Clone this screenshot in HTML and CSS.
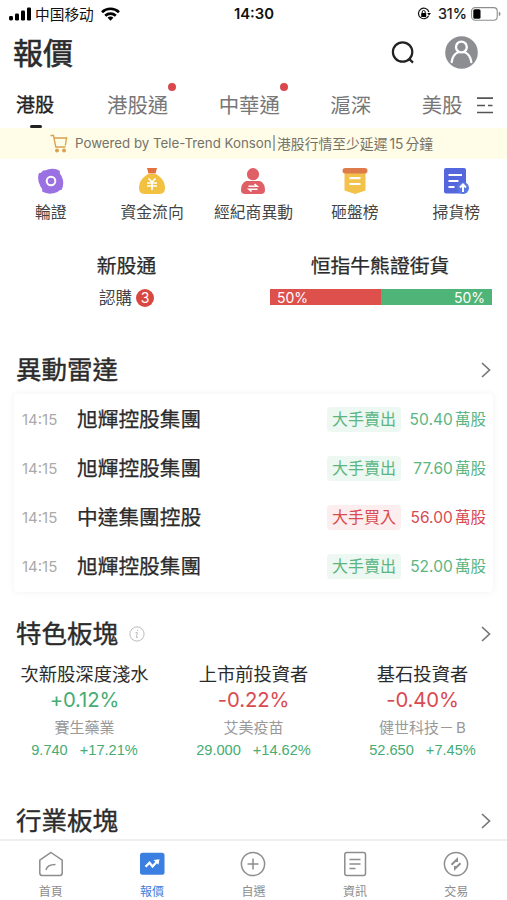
FILE: index.html
```html
<!DOCTYPE html>
<html lang="zh-Hant">
<head>
<meta charset="utf-8">
<meta name="viewport" content="width=device-width, initial-scale=1">
<title>報價</title>
<link rel="stylesheet" href="styles.css">
</head>
<body>
<div class="screen">
  <header class="status">
    <div class="status-left">
      <svg width="22" height="14" viewBox="0 0 22 14"><rect x="0" y="9" width="4" height="4.5" rx="1.4"/><rect x="6" y="6.5" width="4" height="7" rx="1.2"/><rect x="12" y="3.5" width="4" height="10" rx="1.2"/><rect x="18" y="0.5" width="4" height="13" rx="1.2"/></svg>
      <span class="carrier" lang="zh-Hans">中国移动</span>
      <svg width="19" height="14" viewBox="0 0 19 14" fill="none" stroke="#000" stroke-width="2.6"><path d="M1 5.2a12.3 12.3 0 0 1 17 0M4.2 8.7a7.7 7.7 0 0 1 10.6 0"/><path d="M9.5 13.7 6.6 10.8a4 4 0 0 1 5.8 0z" fill="#000" stroke="none"/></svg>
    </div>
    <div class="clock">14:30</div>
    <div class="status-right">
      <svg width="14" height="14" viewBox="0 0 14 14"><path d="M11.6 8.7A5.3 5.3 0 1 1 11.9 5" fill="none" stroke="#111" stroke-width="1.2"/><path d="M10.2 6.1h3.7l-1.8 2.5z"/><rect x="4.2" y="6" width="5" height="4.1" rx=".6"/><path d="M5.2 6V5a1.5 1.5 0 0 1 3 0v1" fill="none" stroke="#111"/></svg>
      <span class="percent">31%</span>
      <svg width="30" height="14" viewBox="0 0 30 14"><rect x=".6" y=".6" width="25.6" height="12.6" rx="3.5" fill="none" stroke="#8d8d8d" stroke-width="1.1"/><rect x="2.3" y="2.3" width="7.2" height="9.4" rx="1.5"/><path d="M27.8 4.8q1.8.6 1.8 2.2t-1.8 2.2z" fill="#8d8d8d"/></svg>
    </div>
  </header>

  <div class="heading">
    <h1>報價</h1>
    <svg class="search" width="24" height="24" viewBox="0 0 24 24" fill="none" stroke="#222" stroke-width="2.2"><circle cx="11.6" cy="11" r="9.7"/><path d="m17.8 17.6 4.2 4"/></svg>
    <svg width="33" height="33" viewBox="0 0 33 33" fill="none"><circle cx="16.5" cy="16.5" r="16.3" fill="#8c8e92"/><g stroke="#fff" stroke-width="2.3" stroke-linecap="round"><circle cx="16.4" cy="11" r="5.4"/><path d="M6.7 26c.6-5.3 3-8.200 6.4-9.700M19.800 16.300c3.400 1.500 5.800 4.400 6.500 9.700"/></g></svg>
  </div>

  <nav class="tabs">
    <span class="tab active">港股</span>
    <span class="tab dot">港股通</span>
    <span class="tab dot">中華通</span>
    <span class="tab">滬深</span>
    <span class="tab">美股</span>
    <svg width="18" height="18" viewBox="0 0 18 18" fill="none" stroke="#555" stroke-width="1.7"><path d="M1 1.200h16M1 8.500h8M12 8.500h4.500M1 15.500h16"/></svg>
  </nav>

  <div class="notice">
    <svg width="18" height="19" viewBox="0 0 18 19" fill="none" stroke="#d9a04e" stroke-width="1.3"><path d="M.5 1.500h3l2.300 11.500h9.700M4 4h12.600l-1.300 7.500"/><circle cx="7" cy="16.500" r="1.300" fill="#d9a04e"/><circle cx="14" cy="16.500" r="1.300" fill="#d9a04e"/></svg>
    <span class="notice-en">Powered by Tele-Trend Konson|</span><span class="notice-zh">港股行情至少延遲<i>15</i>分鐘</span>
  </div>

  <section class="shortcuts">
    <div class="shortcut">
      <svg width="26" height="26" viewBox="0 0 26 26"><path d="M5 2.200Q7 3.200 9 1.800Q16-1 22 3Q21 5 23.500 8Q27 15 23.500 22Q21.500 21.500 19.500 24Q11 27.500 4 23.500Q5 21.500 2.500 18.500Q-1.500 11 1 5Q4 5 5 2.200Z" fill="#9a70e2"/><circle cx="13" cy="13" r="4.300" fill="none" stroke="#fff" stroke-width="2"/></svg>
      <span>輪證</span>
    </div>
    <div class="shortcut">
      <svg width="26" height="26" viewBox="0 0 26 26"><path d="M9 6C3 9.500 0 14.500 0 20q0 6 6 6h14q6 0 6-6C26 14.500 23 9.500 17 6z" fill="#f2c142"/><path d="M8 0h10l-1.500 5.500h-7z" fill="#e2713d"/><path d="M9.500 10.500 13 14l3.500-3.500M8 15h10M8 18h10M13 14v8" fill="none" stroke="#fff" stroke-width="1.700"/></svg>
      <span>資金流向</span>
    </div>
    <div class="shortcut">
      <svg width="26" height="26" viewBox="0 0 26 26"><circle cx="13" cy="6.200" r="6.100" fill="#e05f66"/><path d="M6 13h14q5 2.500 5 9 0 4-4 4H5q-4 0-4-4 0-6.500 5-9z" fill="#e05f66"/><path d="M8.500 18.300h8.500l-2.500-2.300M17.500 21.200H9l2.500 2.300" fill="none" stroke="#fff" stroke-width="1.600"/></svg>
      <span>經紀商異動</span>
    </div>
    <div class="shortcut">
      <svg width="26" height="26" viewBox="0 0 26 26"><path d="M2.500 3h21v19.500L13 26 2.500 22.500z" fill="#f3c24a"/><rect x=".5" y="0" width="25" height="5.500" rx="2.700" fill="#de7b4b"/><path d="M7.500 10.200h11M7.500 16h11" stroke="#fff" stroke-width="2.200"/></svg>
      <span>砸盤榜</span>
    </div>
    <div class="shortcut">
      <svg width="26" height="26" viewBox="0 0 26 26"><rect x="1" y="0" width="22" height="25.500" rx="2" fill="#5567dc"/><path d="M5.500 7h13.500M5.500 13h10M5.500 19h6" stroke="#fff" stroke-width="2"/><circle cx="20" cy="20" r="6" fill="#5a78e2"/><path d="M20 24v-7M17 19.500l3-3 3 3" fill="none" stroke="#fff" stroke-width="2"/></svg>
      <span>掃貨榜</span>
    </div>
  </section>

  <section class="summary">
    <div class="ipo">
      <h3>新股通</h3>
      <p>認購<b>3</b></p>
    </div>
    <div class="street">
      <h3>恒指牛熊證街貨</h3>
      <div class="ratio"><span class="bear">50%</span><span class="bull">50%</span></div>
    </div>
  </section>

  <div class="section-title radar-title"><h2>異動雷達</h2><svg width="10" height="16" viewBox="0 0 10 16"><path d="m1 1 7.500 7L1 15"/></svg></div>
  <section class="radar">
    <div class="trade sell"><time>14:15</time><strong>旭輝控股集團</strong><em>大手賣出</em><span>50.40<i>萬股</i></span></div>
    <div class="trade sell"><time>14:15</time><strong>旭輝控股集團</strong><em>大手賣出</em><span>77.60<i>萬股</i></span></div>
    <div class="trade buy"><time>14:15</time><strong>中達集團控股</strong><em>大手買入</em><span>56.00<i>萬股</i></span></div>
    <div class="trade sell"><time>14:15</time><strong>旭輝控股集團</strong><em>大手賣出</em><span>52.00<i>萬股</i></span></div>
  </section>

  <div class="section-title feature-title"><h2>特色板塊</h2><svg class="info" width="16" height="16" viewBox="0 0 16 16"><circle cx="8" cy="8" r="7.100"/><path d="M6.500 6.600h1.900l-1.100 4.900h1.500M8.700 3.800v1.200"/></svg><svg width="10" height="16" viewBox="0 0 10 16"><path d="m1 1 7.500 7L1 15"/></svg></div>
  <section class="sectors">
    <div class="sector"><h4>次新股深度淺水</h4><p class="change up">+0.12%</p><p class="lead">賽生藥業</p><p class="quote"><span>9.740</span><span>+17.21%</span></p></div>
    <div class="sector"><h4>上市前投資者</h4><p class="change down">-0.22%</p><p class="lead">艾美疫苗</p><p class="quote"><span>29.000</span><span>+14.62%</span></p></div>
    <div class="sector"><h4>基石投資者</h4><p class="change down">-0.40%</p><p class="lead">健世科技－<i>B</i></p><p class="quote"><span>52.650</span><span>+7.45%</span></p></div>
  </section>

  <div class="section-title industry-title"><h2>行業板塊</h2><svg width="10" height="16" viewBox="0 0 10 16"><path d="m1 1 7.500 7L1 15"/></svg></div>

  <nav class="bottom">
    <div class="item"><svg width="26" height="26" viewBox="0 0 26 26"><path d="m13 1.500 11.200 7.700V22q0 2.500-2.500 2.500H4.300Q1.800 24.500 1.800 22V9.200zM8 19q1-5.500 9.500-5.500"/></svg><span>首頁</span></div>
    <div class="item current"><svg width="26" height="26" viewBox="0 0 26 26"><rect x="1" y="1.800" width="24.500" height="22" rx="2.500" fill="#3b7fe0" stroke="none"/><path d="m6.500 15.800 4-4 3 3.600 5-5.500" stroke="#fff" stroke-width="2.300"/><path d="m14.500 9 6-.8-1 5.600z" fill="#fff" stroke="none"/></svg><span>報價</span></div>
    <div class="item"><svg width="26" height="26" viewBox="0 0 26 26"><circle cx="13" cy="13" r="11.600"/><path d="M13 7.500v11M7.500 13h11"/></svg><span>自選</span></div>
    <div class="item"><svg width="26" height="26" viewBox="0 0 26 26"><rect x="2.800" y="1.500" width="20.700" height="23" rx="2"/><path d="M7.500 8.500h11M7.500 13h11M7.500 17.500h6"/></svg><span>資訊</span></div>
    <div class="item"><svg width="26" height="26" viewBox="0 0 26 26"><circle cx="13" cy="13" r="11.600"/><path d="M8.500 13.800l5.500-5.500v2.700M17.500 12.200l-5.500 5.500v-2.700" stroke-width="2"/></svg><span>交易</span></div>
  </nav>
</div>
</body>
</html>
```
FILE: styles.css
```css
* { box-sizing: border-box; margin: 0; padding: 0; }
body { background: #fff; color: #2b2b2b; font-family: Inter, "Noto Sans CJK TC", sans-serif; }
h1, h2, h3, h4, strong, b { font-weight: 400; }
i, em { font-style: normal; }
svg { display: block; flex: none; }
.screen { width: 507px; height: 900px; overflow: hidden; display: flex; flex-direction: column; white-space: nowrap; }
.screen > * { flex: none; }

.status { height: 27px; display: grid; grid-template-columns: 1fr auto 1fr; align-items: center; padding: 0 8px 0 9px; color: #111; }
.status-left, .status-right { display: flex; align-items: center; }
.status-right { margin-right: -2px; }
.carrier { font: 14.700px/26px "Noto Sans CJK SC", sans-serif; margin: 0 7px 0 4px; }
.clock { font-size: 14.800px; font-weight: 600; }
.status-right { justify-content: flex-end; }
.percent { font-size: 14.500px; margin: 0 4px 0 7px; -webkit-text-stroke: .2px; }

.heading { height: 51px; display: flex; align-items: center; padding: 0 29px 0 13px; }
.heading h1 { font-size: 30px; line-height: 50px; -webkit-text-stroke: .6px; }
.search { margin: 0 30px 0 auto; }

.tabs { height: 50px; display: flex; align-items: center; padding: 6px 12px 0 16px; }
.tab { position: relative; font-size: 20.400px; line-height: 44px; color: #777; margin-right: 50.500px; }
.tab.active { color: #222; font-size: 19px; -webkit-text-stroke: .35px; margin-right: 53px; }
.tab.active::after { content: ""; position: absolute; left: 14px; bottom: 0; width: 12px; height: 3px; border-radius: 2px; background: #222; }
.tab.dot::after { content: ""; position: absolute; right: -8px; top: -1px; width: 8px; height: 8px; border-radius: 50%; background: #d9494c; }
.tab:nth-child(5) { margin-right: 14px; }

.notice { height: 31px; display: flex; align-items: center; padding-left: 50px; background: #fffce7; color: #74736a; }
.notice svg { margin-right: 7px; }
.notice-en { font-size: 13.300px; position: relative; top: -1px; }
.notice-zh { font-size: 13.800px; margin-left: 1px; position: relative; top: -1px; }
.notice-zh i { margin: 0 2px; }

.shortcuts { height: 86px; display: grid; grid-template-columns: repeat(5, 1fr); padding-top: 9px; }
.shortcut { display: flex; flex-direction: column; align-items: center; font-size: 15.800px; line-height: 24px; color: #444; }
.shortcut span { margin-top: 7px; }

.summary { height: 102px; display: grid; grid-template-columns: 253px 254px; text-align: center; }
.summary h3 { font-size: 19.800px; line-height: 30px; margin-top: 6px; -webkit-text-stroke: .25px; }
.ipo p { display: flex; justify-content: center; align-items: center; font-size: 16.500px; line-height: 32px; color: #444; margin-top: 1px; }
.ipo b { width: 18px; height: 18px; border-radius: 50%; margin-left: 4px; background: #d94743; color: #fff; font-size: 14px; line-height: 18px; }
.ratio { display: flex; width: 222px; height: 16px; margin: 8px auto 0 17px; color: #fff; font-size: 14px; line-height: 17px; }
.ratio span { flex: 1; padding: 0 7px; }
.bear { background: #de504b; text-align: left; }
.bull { background: #4fb477; text-align: right; }

.section-title { display: flex; align-items: center; padding: 0 16px; }
.section-title h2 { font-size: 25.500px; line-height: 44px; -webkit-text-stroke: .4px; }
.section-title svg { fill: none; stroke: #777; stroke-width: 1.700; }
.section-title svg:last-child { margin-left: auto; }
.section-title .info { margin-left: 11px; stroke: #bbb; stroke-width: 1; }
.radar-title { height: 47px; padding-bottom: 1px; }

.radar { margin: 0 14px; height: 198px; border-radius: 4px; box-shadow: 0 0 6px 2px #f7f7f7; }
.trade { height: 49px; display: flex; align-items: center; padding: 2px 7px 0 8px; font-size: 15.500px; }
.trade time { width: 55px; color: #aaa; font-size: 15px; }
.trade strong { font-size: 20.700px; line-height: 30px; margin-top: 1px; color: #2b2b2b; -webkit-text-stroke: .25px; }
.trade em { margin: 0 0 0 auto; width: 74px; text-align: center; font-size: 16px; line-height: 25px; border-radius: 4px; }
.trade span { width: 85px; line-height: 24px; margin-top: 1px; text-align: right; letter-spacing: .05px; }
.trade span i { margin-left: 2px; }
.sell { color: #5bb581; }
.buy { color: #d94a50; }
.sell em { background: #edf8f2; }
.buy em { background: #fceeee; }

.feature-title { height: 69px; padding-top: 14px; }
.sectors { height: 140px; display: grid; grid-template-columns: repeat(3, 1fr); text-align: center; }
.sector h4 { font-size: 18.300px; line-height: 26px; }
.change { font-size: 20.300px; line-height: 25px; letter-spacing: -.1px; }
.lead { font-size: 15px; line-height: 32px; color: #999; }
.lead i { margin-left: 2px; }
.quote { display: flex; justify-content: center; gap: 12px; font: 14.600px/12px "Liberation Sans", sans-serif; color: #45ac73; }
.up { color: #45ac73; }
.down { color: #d94a50; }
.industry-title { height: 38px; padding-top: 2px; }

.bottom { height: 61px; display: grid; grid-template-columns: repeat(5, 1fr); border-top: 2px solid #eee; background: #fff; padding-top: 10px; }
.item { display: flex; flex-direction: column; align-items: center; font-size: 12px; line-height: 16px; color: #8d8d8d; }
.item svg { fill: none; stroke: #8d8d8d; stroke-width: 1.500; }
.item span { margin-top: 7px; }
.item.current { color: #3b7fe0; }
```
